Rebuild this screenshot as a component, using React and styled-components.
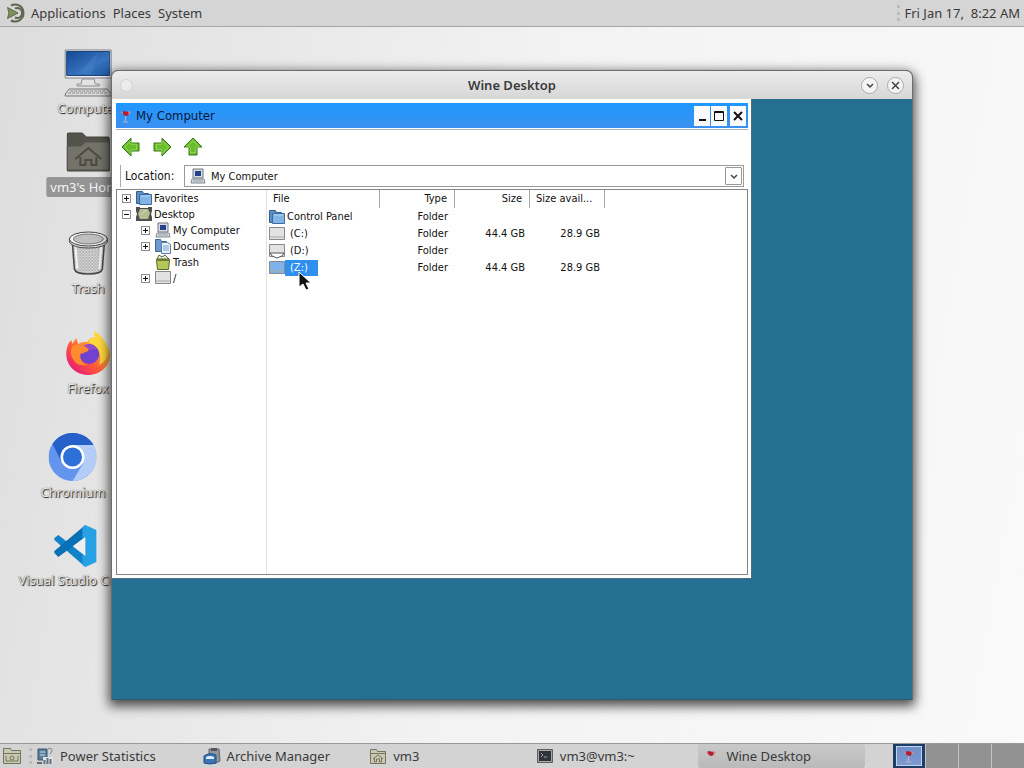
import React, { useState } from 'react'
import styled, { createGlobalStyle, css } from 'styled-components'

const GlobalStyle = createGlobalStyle`
    * { box-sizing: border-box; }
    body {
        margin: 0;
        overflow: hidden;
        font-family: 'Noto Sans', sans-serif;
        font-size: 13px;
        color: #3a3a3a;
    }
    button, select {
        font: inherit;
        color: inherit;
        border: 0;
        padding: 0;
        background: none;
    }
    ul { list-style: none; margin: 0; padding: 0; }
    svg { display: block; flex: none; }
`

const Screen = styled.div`
    display: flex;
    flex-direction: column;
    height: 100vh;
    background: linear-gradient(100deg, #dcdcdc 0%, #e3e3e3 12%, #f3f3f3 50%, #f9f9f9 100%);
`

const TopPanel = styled.header`
    display: flex;
    align-items: center;
    height: 27px;
    padding: 0 4px 0 7px;
    background: #d5d5d5;
    border-bottom: 1px solid #a6a6a6;
`

const MenuBar = styled.nav`
    display: flex;
    align-items: center;
    gap: 7px;
    margin-left: 4px;
`

const MenuButton = styled.button`
    line-height: 24px;
`

const Handle = styled.span`
    width: 3px;
    height: 16px;
    border: dotted #bcbcbc;
    border-width: 0 0 0 3px;
`

const Clock = styled.time`
    margin-left: 5px;
    white-space: pre;
`

const Desktop = styled.main`
    position: relative;
    flex: 1;
    overflow: hidden;
`

const Launcher = styled.button`
    position: absolute;
    left: ${p => p.x}px;
    top: ${p => p.y}px;
    transform: translateX(-50%);
    display: flex;
    flex-direction: column;
    align-items: center;
    gap: ${p => p.gap || 0}px;
`

const LauncherLabel = styled.span`
    padding: 0 4px;
    line-height: 20px;
    white-space: nowrap;
    color: #e6e6e6;
    text-shadow: 1px 1px 1px #222, 0 0 1px #555;
    ${p => p.selected && css`
        color: #f4f4f4;
        background: #959595;
        border-radius: 2px;
        text-shadow: none;
    `}
`

const Window = styled.section`
    position: absolute;
    top: 43px;
    right: 111px;
    bottom: 43px;
    left: 111px;
    display: flex;
    flex-direction: column;
    border: 1px solid #6c6c6c;
    border-bottom-color: #2b5c74;
    border-radius: 7px 7px 0 0;
    box-shadow: 0 4px 12px 2px rgba(0, 0, 0, .7);
    background: #256f92;
`

const WindowBar = styled.header`
    display: grid;
    grid-template-columns: 1fr auto 1fr;
    align-items: center;
    height: 28px;
    padding: 0 8px;
    border-radius: 6px 6px 0 0;
    background: linear-gradient(#ececec, #d6d6d6);
`

const WindowTitle = styled.h1`
    margin: 0;
    font-size: 13px;
    line-height: 20px;
    font-weight: 600;
    color: #3a3a3a;
`

const WindowButtons = styled.div`
    display: flex;
    justify-content: flex-end;
    gap: 9px;
`

const RoundButton = styled.button`
    display: flex;
    align-items: center;
    justify-content: center;
    width: ${p => p.small ? 13 : 17}px;
    height: ${p => p.small ? 13 : 17}px;
    border: 1px solid ${p => p.small ? '#d2d2d2' : '#aaa'};
    border-radius: 50%;
    background: ${p => p.small ? '#ececec' : '#f4f4f4'};
`

const WineDesktop = styled.div`
    flex: 1;
    min-height: 0;
`

const Explorer = styled.section`
    display: flex;
    flex-direction: column;
    width: 80%;
    height: 80%;
    padding: 4px 3px 3px 4px;
    border-right: 1px solid #4b6f80;
    border-bottom: 1px solid #4b6f80;
    background: #fff;
    color: #111;
    font-family: 'DejaVu Sans Condensed', 'DejaVu Sans', sans-serif;
    font-size: 11px;
`

const ExplorerBar = styled.header`
    display: flex;
    align-items: center;
    height: 25px;
    padding: 0 2px 0 4px;
    background: linear-gradient(#1f98ff, #3a90f0);
`

const ExplorerTitle = styled.h2`
    flex: 1;
    margin: 0 0 0 4px;
    font-size: 13px;
    font-weight: 400;
    color: #06193a;
`

const SquareButtons = styled.div`
    display: flex;
    gap: 1px;
`

const SquareButton = styled.button`
    display: flex;
    align-items: center;
    justify-content: center;
    width: 16px;
    height: 20px;
    background: #fbfbfb;
    color: #111;
    &:last-child { margin-left: 2px; }
`

const Toolbar = styled.div`
    display: flex;
    align-items: center;
    gap: 11px;
    height: 37px;
    padding: 0 5px;
    border-top: 1px solid #fff;
    box-shadow: inset 0 1px #a9b4bd;
`

const LocationBar = styled.div`
    display: flex;
    align-items: center;
    height: 22px;
    margin: 0 4px 2px 4px;
    border-left: 1px solid #aaa;
`

const LocationLabel = styled.label`
    width: 63px;
    padding-left: 4px;
    font-size: 12px;
`

const LocationBox = styled.div`
    display: flex;
    align-items: center;
    flex: 1;
    height: 22px;
    padding: 0 1px 0 5px;
    border: 1px solid #999;
`

const LocationSelect = styled.select`
    flex: 1;
    min-width: 0;
    margin-left: 5px;
    appearance: none;
    outline: none;
`

const DropArrow = styled.span`
    display: flex;
    align-items: center;
    justify-content: center;
    width: 17px;
    height: 18px;
    border: 1px solid #999;
    border-radius: 1px;
    pointer-events: none;
`

const Panes = styled.div`
    display: flex;
    flex: 1;
    min-height: 0;
    border: 1px solid #858585;
`

const TreePane = styled.nav`
    width: 150px;
    border-right: 1px solid #e2e2e2;
`

const TreeRow = styled.div`
    display: flex;
    align-items: center;
    height: 16px;
    padding-left: ${p => 5 + p.level * 19}px;
    white-space: nowrap;
`

const Expander = styled.button`
    display: flex;
    align-items: center;
    justify-content: center;
    width: 9px;
    height: 9px;
    margin-right: 5px;
    border: 1px solid #8d8d8d;
    visibility: ${p => p.leaf ? 'hidden' : 'visible'};
`

const TreeLabel = styled.span`
    margin-left: 2px;
`

const ListPane = styled.div`
    flex: 1;
`

const FileTable = styled.table`
    table-layout: fixed;
    width: 338px;
    border-spacing: 0;
    th, td {
        height: 17px;
        padding: 0 7px 0 0;
        font-weight: 400;
        line-height: 16px;
        white-space: nowrap;
        text-align: right;
    }
    th {
        height: 18px;
        border-right: 1px solid #a5a5a5;
    }
    th:first-child { padding-left: 6px; text-align: left; }
    th:last-child { padding: 0 0 0 6px; text-align: left; }
    td:first-child { padding-left: 2px; text-align: left; }
    td + td + td { padding-right: 5px; }
`

const FileName = styled.span`
    display: flex;
    align-items: center;
`

const FileLabel = styled.span`
    padding: 0 ${p => p.drive ? 10 : 1}px 0 ${p => p.drive ? 5 : 2}px;
    ${p => p.selected && css`
        color: #fff;
        background: #2e8fee;
    `}
`

const Cursor = styled.svg`
    position: absolute;
    left: 298px;
    top: 244px;
`

const BottomPanel = styled.footer`
    display: flex;
    align-items: center;
    height: 25px;
    padding-left: 2px;
    background: #d3d3d3;
    border-top: 1px solid #999;
`

const PanelButton = styled.button`
    margin-right: 7px;
`

const TaskList = styled.div`
    display: flex;
    flex: 1;
    margin: 0 28px 0 0;
`

const Task = styled.button`
    display: flex;
    flex: 1 1 0;
    min-width: 0;
    align-items: center;
    gap: 6px;
    height: 24px;
    padding: 0 4px;
    border-radius: 3px;
    white-space: nowrap;
    background: ${p => p.active ? 'linear-gradient(#c9c9c9, #bababa)' : 'none'};
`

const Workspaces = styled.div`
    display: flex;
    gap: 1px;
    height: 24px;
    background: #c4c4c4;
`

const Workspace = styled.button`
    display: flex;
    align-items: center;
    justify-content: center;
    width: 32px;
    background: ${p => p.active ? '#1d3d66' : '#929292'};
`

const WorkspaceWindow = styled.span`
    display: flex;
    align-items: center;
    justify-content: center;
    width: 26px;
    height: 20px;
    border: 1px solid #c3d3ec;
    background: linear-gradient(#6f8fca, #7c9ad0);
`

const MateLogo = () => (
    <svg width="20" height="20" viewBox="0 0 20 20" fill="none" stroke="#5e6650" strokeWidth="2">
        <path d="M4 2.500a8.500 8.500 0 1 1 0 15" />
        <path d="M8 5.500a5 5 0 1 1 0 9" />
        <path d="M.5 4.500 11 10 .5 15.500 2 10z" fill="#7b9456" strokeWidth="1" />
    </svg>
)

const ComputerArt = () => (
    <svg width="48" height="48" viewBox="0 0 48 48">
        <defs>
            <linearGradient id="screen" x1="0" y1="0" x2="1" y2="1">
                <stop offset="0" stopColor="#164a94" /><stop offset=".6" stopColor="#3672bd" /><stop offset="1" stopColor="#1f57a3" />
            </linearGradient>
        </defs>
        <path d="M1 1h46v28H1z" fill="#eee" stroke="#7d8187" />
        <path d="M2.500 2.500h43v24h-43z" fill="url(#screen)" stroke="#1b4480" />
        <path d="M14 24 34 4 27 26z" fill="#4c83c5" opacity=".45" />
        <path d="M18 30h12l1 5h4v2H13v-2h4z" fill="#e4e4e4" stroke="#8c8c8c" />
        <path d="M5 40h38l4 5v2H1v-2z" fill="#dcdcdc" stroke="#777" />
        <path d="M6 42h36M4 44h40" stroke="#898989" strokeDasharray="3 1" />
    </svg>
)

const HomeArt = () => (
    <svg width="46" height="40" viewBox="0 0 46 40">
        <path d="M2 39V2q0-1 1-1h14l4 4h22q1 0 1 2v32z" fill="#53534b" stroke="#44443e" />
        <path d="M2 14h14l4-4h24v28H2z" fill="#73736a" stroke="#55554d" />
        <path d="m10 27 13-11 13 11M15 25v8h5v-5h6v5h5v-8" fill="none" stroke="#4b4b44" strokeWidth="2" />
    </svg>
)

const TrashArt = () => (
    <svg width="40" height="45" viewBox="0 0 40 45">
        <defs>
            <pattern id="mesh" width="3" height="3" patternUnits="userSpaceOnUse">
                <path d="M0 0h3v3H0z" fill="#dcdcdc" /><path d="m0 0 3 3M3 0 0 3" stroke="#a2a2a2" strokeWidth=".7" />
            </pattern>
        </defs>
        <path d="M4 12 6 38q1 5 14 5t14-5l2-26z" fill="url(#mesh)" stroke="#484848" strokeWidth="1.5" />
        <path d="M7 14 9 38M33 14l-2 24" stroke="#f4f4f4" strokeWidth="2" />
        <path d="M1 7v4q3 6 19 6t19-6V7z" fill="#d6d6d6" stroke="#484848" />
        <ellipse cx="20" cy="8" rx="19" ry="7" fill="#f4f4f4" stroke="#484848" />
        <ellipse cx="20" cy="8" rx="15" ry="5" fill="#bfbfbf" stroke="#777" />
    </svg>
)

const FirefoxArt = () => (
    <svg width="46" height="46" viewBox="0 0 46 46">
        <defs>
            <linearGradient id="fox" x1=".9" y1=".1" x2=".2" y2=".9">
                <stop offset="0" stopColor="#fff44f" /><stop offset=".35" stopColor="#ffa436" />
                <stop offset=".65" stopColor="#ff5a36" /><stop offset="1" stopColor="#e92273" />
            </linearGradient>
        </defs>
        <path d="M29 1q6 4 8 10 7 5 8 13c0 12-10 21-22 21S1 36 1 24q0-9 5-14l1 4 4-6 2 6q5-3 9-2 3-5 8-5-2-3-1-6z" fill="url(#fox)" />
        <circle cx="24" cy="24" r="10" fill="#7142d0" />
        <path d="M16 17q8-6 16 2l-8 1q-5 1-6 5-3-4-2-8z" fill="#9548c8" />
        <path d="M8 15q8-2 14 3 3 2-1 4l-6 2q-1 9 8 11-14 2-17-10-1-6 2-10z" fill="#ff8b31" />
        <path d="M29 1q11 7 13 17 2 12-8 17 3-10-2-17-4-4-9-6 2-4 7-5-2-3-1-6z" fill="#ffd83d" />
    </svg>
)

const ChromiumArt = () => (
    <svg width="48" height="48" viewBox="0 0 48 48">
        <circle cx="24" cy="24" r="24" fill="#6495ee" />
        <path d="M24 12h21a24 24 0 0 1-21 36l11-18z" fill="#b3cdf8" />
        <path d="M4 11a24 24 0 0 1 41 1H24q-10 1-12 12l1 5z" fill="#2560c8" />
        <circle cx="24" cy="24" r="12" fill="#fff" />
        <circle cx="24" cy="24" r="9.500" fill="#2d70d8" />
    </svg>
)

const CodeArt = () => (
    <svg width="44" height="44" viewBox="0 0 44 44">
        <path d="m1 14 4-3 27 21v11L1 16z" fill="#1182c8" />
        <path d="m1 29 4 4L32 13V1L1 27z" fill="#0870b4" />
        <path d="m32 1 11 5v32l-11 5-3-2V3z" fill="#27a0e4" />
        <path d="M32 13 20 22l12 10z" fill="#efefef" />
    </svg>
)

const WineGlass = ({ width = 12 }) => (
    <svg width={width} height="16" viewBox="0 0 12 16">
        <path d="m3 3 6 1q0 4-3 4-4-1-3-5z" fill="#b0202f" />
        <path d="M3 3 1 5l2 1zM8 3l3 1-2 3z" fill="#d98590" />
        <path d="m6 8-1 5M3 14h5" stroke="#c9b9c2" fill="none" />
    </svg>
)

const ARROWS = {
    Back: 'M1 10 10 1v5h8v8h-8v5z',
    Forward: 'M19 10 10 1v5H2v8h8v5z',
    Up: 'M10 1 1 10h5v8h8v-8h5z',
}

const ArrowArt = ({ d }) => (
    <svg width="20" height="20" viewBox="0 0 20 20">
        <path d={d} fill="#69bd2b" stroke="#347518" />
        <path d={d} fill="none" stroke="#a5e36a" strokeWidth="1" transform="translate(3 3) scale(.7)" />
    </svg>
)

const PcArt = () => (
    <svg width="16" height="16" viewBox="0 0 16 16">
        <path d="M3 1h10v9H3z" fill="#d9dde3" stroke="#6d7683" />
        <path d="M5 3h6v5H5z" fill="#24418c" />
        <path d="M2 11h12l1 4H1z" fill="#dfe3e6" stroke="#7b8792" />
        <path d="M3 13h10" stroke="#8a95a0" />
    </svg>
)

const FolderArt = () => (
    <svg width="16" height="16" viewBox="0 0 16 16">
        <path d="M.5 13.500v-12h6l1 2h5v10z" fill="#5d8fc4" stroke="#365f8d" />
        <path d="M3.500 14.500v-10h12v10z" fill="#83b4e4" stroke="#3b6da3" />
        <path d="M5 6h9" stroke="#b5d6f4" />
    </svg>
)

const DeskArt = () => (
    <svg width="16" height="16" viewBox="0 0 16 16">
        <path d="M0 1h4v1h8V1h4v4l-1 3 1 3v4H0v-4l1-3-1-3z" fill="#4d504e" />
        <path d="M4 3h8l2 4-2 6H4L2 8z" fill="#b6bd93" />
        <path d="m5 9 5-5" stroke="#d9deba" />
    </svg>
)

const DocsArt = () => (
    <svg width="16" height="16" viewBox="0 0 16 16">
        <path d="M.5 13.500v-12h5l1 2h5v10z" fill="#6c9bcf" stroke="#41668f" />
        <path d="M6.500 4.500h6l3 2v9h-9z" fill="#e8f1fa" stroke="#5b80a8" />
        <path d="M8 8h6M8 10h6M8 12h6" stroke="#79a0cb" />
    </svg>
)

const BinArt = () => (
    <svg width="16" height="16" viewBox="0 0 16 16">
        <path d="m2 5 2-4 3 2 3-2 4 4z" fill="#e6ecd8" stroke="#56653a" />
        <path d="M1.500 6.500h13l-1 9h-11z" fill="#b4c758" stroke="#586a25" />
        <path d="M1 5h14v2H1z" fill="#6b7c35" />
    </svg>
)

const DriveArt = ({ color = '#e2e2e2', disc }) => (
    <svg width="16" height="16" viewBox="0 0 16 16">
        <path d="M.5 1.500h15v12H.5z" fill={color} stroke="#898989" />
        <path d="M1 11h14" stroke="#a9a9a9" />
        {disc && <path d="M1 10h14l-2 3-5 2-5-2z" fill="#fff" stroke="#555" />}
    </svg>
)

const HomeFolderArt = () => (
    <svg width="18" height="16" viewBox="0 0 18 16" fill="none" stroke="#74745f">
        <path d="M1.500 15.500v-14h6l1 2h8v12z" fill="#c8c8b4" />
        <path d="M1.500 5.500h15M4 11l5-4 5 4M5.500 10v4h2v-3h3v3h2v-4" />
    </svg>
)

const FilesArt = () => (
    <svg width="20" height="18" viewBox="0 0 20 18" fill="none" stroke="#74745f">
        <path d="M1.500 16.500v-15h7l1 2h9v13z" fill="#c9c9b2" />
        <path d="M1.500 6.500h17M4 9v5h12V9" />
        <circle cx="10" cy="11" r="2" />
    </svg>
)

const PowerArt = () => (
    <svg width="18" height="18" viewBox="0 0 18 18">
        <path d="M2 2h9v11H2z" fill="#5b7f9a" stroke="#35546c" />
        <path d="M4 5h5M4 8h5" stroke="#c9dce9" />
        <path d="M12 2q4-2 4 2l-2 3" fill="none" stroke="#6b8395" />
        <path d="M7 10h10v7H7z" fill="#dfe3e6" />
        <path d="M8.500 17v-4M11.500 17v-6M14.500 17v-5M1 16h5" stroke="#5f6d78" strokeWidth="2" />
    </svg>
)

const ArchiveArt = () => (
    <svg width="18" height="18" viewBox="0 0 18 18">
        <path d="M6 2h10l1 12-4 2H6z" fill="#92989e" stroke="#5c646c" />
        <path d="M8 1h6v3H8z" fill="#555" />
        <path d="M1 9q6-4 12-1v8q-6 2-12 0z" fill="#3b74b4" stroke="#244f83" />
        <path d="M3 10q4-2 8 0v2H3z" fill="#e1ebf5" />
    </svg>
)

const TerminalArt = () => (
    <svg width="18" height="16" viewBox="0 0 18 16">
        <path d="M1.500 1.500h15v13h-15z" fill="#30343a" stroke="#5d6166" />
        <path d="M2.500 2.500h13v11h-13z" fill="none" stroke="#a6a9ac" />
        <path d="m5 5 2 2-2 2M8 9h3" fill="none" stroke="#a0a6ac" />
    </svg>
)

const Chevron = ({ size = 8, color = '#444' }) => (
    <svg width={size} height={size} viewBox="0 0 8 8">
        <path d="m1 3 3 3 3-3" fill="none" stroke={color} strokeWidth="1.5" />
    </svg>
)

const LAUNCHERS = [
    { name: 'Computer', x: 88, y: 22, gap: 1, Art: ComputerArt },
    { name: "vm3's Home", x: 88, y: 105, gap: 5, Art: HomeArt },
    { name: 'Trash', x: 88, y: 204, gap: 2, Art: TrashArt },
    { name: 'Firefox', x: 88, y: 303, gap: 2, Art: FirefoxArt },
    { name: 'Chromium', x: 73, y: 406, gap: 1, Art: ChromiumArt },
    { name: 'Visual Studio Code', x: 75, y: 497, gap: 2, Art: CodeArt },
]

const TREE = [
    { name: 'Favorites', level: 0, sign: '+', Art: FolderArt },
    { name: 'Desktop', level: 0, sign: '-', Art: DeskArt },
    { name: 'My Computer', level: 1, sign: '+', Art: PcArt },
    { name: 'Documents', level: 1, sign: '+', Art: DocsArt },
    { name: 'Trash', level: 1, Art: BinArt },
    { name: '/', level: 1, sign: '+', Art: DriveArt },
]

const FILES = [
    { name: 'Control Panel', icon: <FolderArt /> },
    { name: '(C:)', drive: true, size: '44.4 GB', free: '28.9 GB', icon: <DriveArt /> },
    { name: '(D:)', drive: true, icon: <DriveArt disc /> },
    { name: '(Z:)', drive: true, size: '44.4 GB', free: '28.9 GB', icon: <DriveArt color="#7fb2ea" /> },
]

const TASKS = [
    { name: 'Power Statistics', icon: <PowerArt /> },
    { name: 'Archive Manager', icon: <ArchiveArt /> },
    { name: 'vm3', icon: <HomeFolderArt /> },
    { name: 'vm3@vm3:~', icon: <TerminalArt /> },
    { name: 'Wine Desktop', icon: <WineGlass width={18} /> },
]

const FileExplorer = () => {
    const [selected, setSelected] = useState('(Z:)')
    return (
        <Explorer>
            <ExplorerBar>
                <WineGlass />
                <ExplorerTitle>My Computer</ExplorerTitle>
                <SquareButtons>
                    <SquareButton aria-label="Minimize">
                        <svg width="12" height="12"><path d="M3 10h7" stroke="#111" strokeWidth="2" /></svg>
                    </SquareButton>
                    <SquareButton aria-label="Maximize">
                        <svg width="12" height="12" fill="none" stroke="#111"><path d="M1.500 1.500h9v9h-9zM1 2.500h10" /></svg>
                    </SquareButton>
                    <SquareButton aria-label="Close">
                        <svg width="12" height="12"><path d="m2 2 8 8M10 2l-8 8" stroke="#111" strokeWidth="2" /></svg>
                    </SquareButton>
                </SquareButtons>
            </ExplorerBar>
            <Toolbar>
                {Object.keys(ARROWS).map(name => (
                    <button key={name} aria-label={name}><ArrowArt d={ARROWS[name]} /></button>
                ))}
            </Toolbar>
            <LocationBar>
                <LocationLabel htmlFor="location">Location:</LocationLabel>
                <LocationBox>
                    <PcArt />
                    <LocationSelect id="location">
                        <option>My Computer</option>
                    </LocationSelect>
                    <DropArrow><Chevron /></DropArrow>
                </LocationBox>
            </LocationBar>
            <Panes>
                <TreePane>
                    <ul>
                        {TREE.map(({ name, level, sign, Art }) => (
                            <li key={name}>
                                <TreeRow level={level}>
                                    <Expander leaf={!sign} aria-label={`Toggle ${name}`}>
                                        <svg width="7" height="7">
                                            <path d={sign === '-' ? 'M1 3.500h5' : 'M1 3.500h5M3.500 1v5'} stroke="#111" />
                                        </svg>
                                    </Expander>
                                    <Art />
                                    <TreeLabel>{name}</TreeLabel>
                                </TreeRow>
                            </li>
                        ))}
                    </ul>
                </TreePane>
                <ListPane>
                    <FileTable>
                        <colgroup>
                            <col width="113" />
                            <col width="75" />
                            <col width="75" />
                            <col width="75" />
                        </colgroup>
                        <thead>
                            <tr>
                                <th>File</th>
                                <th>Type</th>
                                <th>Size</th>
                                <th>Size avail...</th>
                            </tr>
                        </thead>
                        <tbody>
                            {FILES.map(f => (
                                <tr key={f.name} onClick={() => setSelected(f.name)}>
                                    <td>
                                        <FileName>
                                            {f.icon}
                                            <FileLabel drive={f.drive} selected={f.name === selected}>{f.name}</FileLabel>
                                        </FileName>
                                    </td>
                                    <td>Folder</td>
                                    <td>{f.size}</td>
                                    <td>{f.free}</td>
                                </tr>
                            ))}
                        </tbody>
                    </FileTable>
                </ListPane>
            </Panes>
        </Explorer>
    )
}

export default function App() {
    return (
        <Screen>
            <GlobalStyle />
            <TopPanel>
                <MateLogo />
                <MenuBar>
                    <MenuButton>Applications</MenuButton>
                    <MenuButton>Places</MenuButton>
                    <MenuButton>System</MenuButton>
                </MenuBar>
                <Handle style={{ marginLeft: 'auto' }} />
                <Clock>Fri Jan 17,  8:22 AM</Clock>
            </TopPanel>
            <Desktop>
                {LAUNCHERS.map(({ name, x, y, gap, Art }) => (
                    <Launcher key={name} x={x} y={y} gap={gap}>
                        <Art />
                        <LauncherLabel selected={name === "vm3's Home"}>{name}</LauncherLabel>
                    </Launcher>
                ))}
                <Window>
                    <WindowBar>
                        <RoundButton small aria-label="Window menu" />
                        <WindowTitle>Wine Desktop</WindowTitle>
                        <WindowButtons>
                            <RoundButton aria-label="Minimize"><Chevron /></RoundButton>
                            <RoundButton aria-label="Close">
                                <svg width="9" height="9"><path d="m1 1 7 7M8 1 1 8" stroke="#444" strokeWidth="1.5" /></svg>
                            </RoundButton>
                        </WindowButtons>
                    </WindowBar>
                    <WineDesktop>
                        <FileExplorer />
                    </WineDesktop>
                </Window>
                <Cursor width="14" height="21" viewBox="0 0 14 21">
                    <path d="M1 1v15l4-3 3 6 3-1-3-6h5z" fill="#111" stroke="#fff" />
                </Cursor>
            </Desktop>
            <BottomPanel>
                <PanelButton aria-label="Show desktop"><FilesArt /></PanelButton>
                <Handle />
                <TaskList>
                    {TASKS.map(t => (
                        <Task key={t.name} active={t.name === 'Wine Desktop'}>
                            {t.icon}
                            {t.name}
                        </Task>
                    ))}
                </TaskList>
                <Workspaces>
                    <Workspace active aria-label="Workspace 1">
                        <WorkspaceWindow><WineGlass /></WorkspaceWindow>
                    </Workspace>
                    <Workspace aria-label="Workspace 2" />
                    <Workspace aria-label="Workspace 3" />
                    <Workspace aria-label="Workspace 4" />
                </Workspaces>
            </BottomPanel>
        </Screen>
    )
}
